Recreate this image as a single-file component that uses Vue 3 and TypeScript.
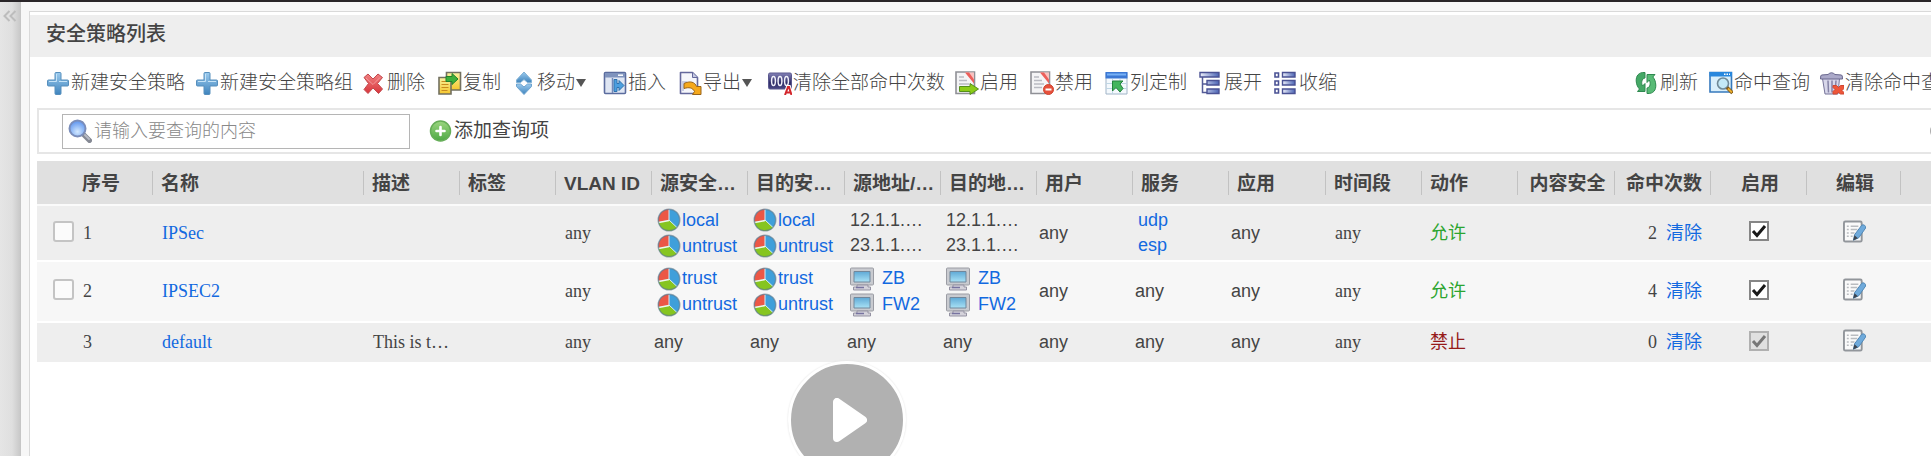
<script setup lang="ts">
import { ref } from 'vue'

interface Tool { icon: string; label: string; menu?: boolean }
interface Entry { text: string; icon?: string; link?: boolean }
interface Policy {
  id: number
  name: string
  desc: string
  vlan: string
  cells: Entry[][]
  time: string
  allow: boolean
  hits: number
  enabled: boolean
  builtin: boolean
  selected: boolean
}

const tools: Tool[] = [
  { icon: 'plus', label: '新建安全策略' },
  { icon: 'plus', label: '新建安全策略组' },
  { icon: 'delete', label: '删除' },
  { icon: 'copy', label: '复制' },
  { icon: 'move', label: '移动', menu: true },
  { icon: 'insert', label: '插入' },
  { icon: 'export', label: '导出', menu: true },
  { icon: 'counter', label: '清除全部命中次数' },
  { icon: 'enable', label: '启用' },
  { icon: 'disable', label: '禁用' },
  { icon: 'columns', label: '列定制' },
  { icon: 'expand', label: '展开' },
  { icon: 'collapse', label: '收缩' },
]

const rightTools: Tool[] = [
  { icon: 'refresh', label: '刷新' },
  { icon: 'lookup', label: '命中查询' },
  { icon: 'trash', label: '清除命中查询' },
]

const headers = [
  '序号', '名称', '描述', '标签', 'VLAN ID', '源安全…', '目的安…', '源地址/…', '目的地…',
  '用户', '服务', '应用', '时间段', '动作', '内容安全', '命中次数', '启用', '编辑',
]
const centered = ['内容安全', '命中次数', '启用', '编辑']
const wideColumns = [5, 10, 13]

const any: Entry[] = [{ text: 'any' }]
const zones = (...names: string[]): Entry[] => names.map((text) => ({ text, icon: 'zone', link: true }))
const hosts = (...names: string[]): Entry[] => names.map((text) => ({ text, icon: 'host', link: true }))
const addresses: Entry[] = [{ text: '12.1.1.…' }, { text: '23.1.1.…' }]

const policies = ref<Policy[]>([
  {
    id: 1, name: 'IPSec', desc: '', vlan: 'any',
    cells: [
      zones('local', 'untrust'), zones('local', 'untrust'), addresses, addresses, any,
      [{ text: 'udp', link: true }, { text: 'esp', link: true }], any,
    ],
    time: 'any', allow: true, hits: 2, enabled: true, builtin: false, selected: false,
  },
  {
    id: 2, name: 'IPSEC2', desc: '', vlan: 'any',
    cells: [
      zones('trust', 'untrust'), zones('trust', 'untrust'), hosts('ZB', 'FW2'), hosts('ZB', 'FW2'),
      any, any, any,
    ],
    time: 'any', allow: true, hits: 4, enabled: true, builtin: false, selected: false,
  },
  {
    id: 3, name: 'default', desc: 'This is t…', vlan: 'any',
    cells: [any, any, any, any, any, any, any],
    time: 'any', allow: false, hits: 0, enabled: true, builtin: true, selected: false,
  },
])

const query = ref('')
</script>

<template>
  <svg class="sprite" aria-hidden="true">
    <defs>
      <linearGradient id="g-blue" x1="0" y1="0" x2="0" y2="1"><stop offset="0" stop-color="#9ccbee" /><stop offset="1" stop-color="#3f84bd" /></linearGradient>
      <linearGradient id="g-red" x1="0" y1="0" x2="0" y2="1"><stop offset="0" stop-color="#f08080" /><stop offset="1" stop-color="#d8353c" /></linearGradient>
      <linearGradient id="g-green" x1="0" y1="0" x2="0" y2="1"><stop offset="0" stop-color="#9bd67f" /><stop offset="1" stop-color="#4ea845" /></linearGradient>
      <linearGradient id="g-screen" x1="0" y1="0" x2="0" y2="1"><stop offset="0" stop-color="#5fa9d6" /><stop offset="1" stop-color="#a9e2f5" /></linearGradient>
      <linearGradient id="g-bar" x1="0" y1="0" x2="1" y2="0"><stop offset="0" stop-color="#eef1fb" /><stop offset="1" stop-color="#4a63b4" /></linearGradient>
      <linearGradient id="g-counter" x1="0" y1="0" x2="0" y2="1"><stop offset="0" stop-color="#8583b8" /><stop offset="0.6" stop-color="#2f2d68" /><stop offset="1" stop-color="#4a4885" /></linearGradient>
      <radialGradient id="g-lens" cx="0.5" cy="0.7" r="0.6"><stop offset="0" stop-color="#d3e9ff" /><stop offset="1" stop-color="#6a9df0" /></radialGradient>
      <linearGradient id="g-gold" x1="0" y1="0" x2="0" y2="1"><stop offset="0" stop-color="#f8f3a0" /><stop offset="1" stop-color="#f6c62c" /></linearGradient>
    </defs>
    <symbol id="i-plus" viewBox="0 0 24 24">
      <path d="M10 1.500h4q1 0 1 1V9h6.500q1 0 1 1v4q0 1-1 1H15v7.500q0 1-1 1h-4q-1 0-1-1V15H2.500q-1 0-1-1v-4q0-1 1-1H9V2.500q0-1 1-1z" fill="url(#g-blue)" stroke="#568fbd" />
      <path d="M10.500 3v7.500H3M13 10.500h8" fill="none" stroke="#c5e3f7" />
    </symbol>
    <symbol id="i-delete" viewBox="0 0 24 24">
      <path d="M2 6.500L6 3l5 5 5-5 4.500 3.500L15.500 12.500l5 5.500L16.500 22.500l-5.500-5.500-5 5.500L2 18.500l4.500-6z" fill="url(#g-red)" stroke="#c2484c" stroke-linejoin="round" />
      <path d="M4 7l7 6.500L18 6.500" fill="none" stroke="#f9aeb0" opacity="0.700" />
    </symbol>
    <symbol id="i-copy" viewBox="0 0 24 24">
      <path d="M8.500 1.500h14V19h-14z" fill="url(#g-gold)" stroke="#727060" stroke-width="1.600" />
      <path d="M1 6.500h12V23H1z" fill="url(#g-gold)" stroke="#727060" stroke-width="1.600" />
      <path d="M3.500 10.500h6M3.500 13.500h7M3.500 16.500h7M3.500 19.500h6" stroke="#c98a1e" stroke-width="1.200" />
      <path d="M8 5.500h6V2.500l6 5.500-6 5.500v-3H8z" fill="#3eb03b" stroke="#23812a" />
    </symbol>
    <symbol id="i-move" viewBox="0 0 24 24">
      <path d="M12 1l7.500 8v2.500h-4L12 8.500l-3.500 3h-4V9z" fill="url(#g-blue)" stroke="#7fb0d4" />
      <path d="M12 23.500L4.500 15.500V13h4l3.500 3 3.500-3h4v2.500z" fill="url(#g-blue)" stroke="#6da3cf" />
    </symbol>
    <symbol id="i-insert" viewBox="0 0 24 24">
      <rect x="1.500" y="1.500" width="21" height="21" rx="1" fill="#dfe6f3" stroke="#5b6c9e" stroke-width="1.600" />
      <path d="M2 2h20v4.500H2z" fill="#7f93bd" /><path d="M15 4.200h5" stroke="#fff" stroke-width="1.500" />
      <path d="M9.500 7v15" stroke="#7388b8" stroke-width="1.500" />
      <path d="M11 8.500h3v4h2v-3l5 5-5 5v-3h-2v4h-3z" fill="#4c9fdf" stroke="#2f71ad" />
    </symbol>
    <symbol id="i-export" viewBox="0 0 24 24">
      <path d="M2.500 1.500h12l5 5v16h-17z" fill="#f5f6fb" stroke="#64689c" stroke-width="1.600" stroke-linejoin="round" />
      <path d="M14.500 1.500v5h5" fill="#c5c9e3" stroke="#64689c" />
      <path d="M5 20v-9h4" fill="none" stroke="#c9cde3" stroke-width="2" />
      <path d="M6 12.500c6-3 11-1.500 12.500 3H23v8h-8.500l2-3C14.500 16.500 11 16 6 17.500z" fill="#f5a81c" stroke="#99641a" stroke-linejoin="round" />
    </symbol>
    <symbol id="i-counter" viewBox="0 0 24 24">
      <rect x="0.500" y="2" width="23" height="16" rx="1.500" fill="url(#g-counter)" stroke="#5a588e" />
      <g fill="none" stroke="#f1f1fa" stroke-width="1.500"><ellipse cx="5.500" cy="10" rx="1.900" ry="4.500" /><ellipse cx="12" cy="10" rx="1.900" ry="4.500" /><ellipse cx="18.500" cy="10" rx="1.900" ry="4.500" /></g>
      <path d="M17 24l3-8h1l2.500 8M18 21.500h4.500" fill="none" stroke="#fff" stroke-width="4" />
      <path d="M17 24l3-8h1l2.500 8M18 21.500h4.500" fill="none" stroke="#d3262c" stroke-width="2" />
    </symbol>
    <symbol id="i-enable" viewBox="0 0 24 24">
      <path d="M1 1h18.500v21.500H1z" fill="#f4f4f6" stroke="#8f9096" stroke-width="1.600" />
      <path d="M4 6h5M4 9.500h8M4 13h10" stroke="#b9bac2" stroke-width="1.500" />
      <path d="M10 1.500h9v10z" fill="#f9c2c0" /><path d="M10 1.500h4l5 7v4z" fill="#ec5f5b" />
      <path d="M4.500 15.500H15V12.500l8.500 5.500-8.500 5.500v-3H4.500z" fill="#8ccc17" stroke="#55901b" stroke-linejoin="round" />
    </symbol>
    <symbol id="i-disable" viewBox="0 0 24 24">
      <path d="M1 1h18.500v21.500H1z" fill="#f4f4f6" stroke="#8f9096" stroke-width="1.600" />
      <path d="M4 6h5M4 9.500h8M4 13h10M4 16.500h8" stroke="#b9bac2" stroke-width="1.500" />
      <path d="M10 1.500h9v10z" fill="#f9c2c0" /><path d="M10 1.500h4l5 7v4z" fill="#ec5f5b" />
      <circle cx="18.500" cy="18.500" r="5" fill="#e6503b" stroke="#cf442f" /><path d="M15.500 18.500h6" stroke="#fff" stroke-width="2" />
    </symbol>
    <symbol id="i-columns" viewBox="0 0 24 24">
      <path d="M1 1.500h21V23H1z" fill="#f4f9fd" stroke="#a1b4c7" />
      <path d="M.5 1h22v6.500H.5z" fill="#3c78d4" /><path d="M2 3.500h19" stroke="#76b1f6" stroke-width="2" />
      <path d="M7.500 8v15M1 12.500h21M1 17.500h21M15 8v15" stroke="#bfd6e4" />
      <path d="M7.500 10h10.500l-3 3 3 4.500-3 3.500-4-4.500-3.500 3.500z" fill="#43b55d" stroke="#24833d" />
    </symbol>
    <symbol id="i-expand" viewBox="0 0 24 24">
      <path d="M3.500 6v15.500H8M3.500 13H8" fill="none" stroke="#555c97" stroke-width="1.500" />
      <g fill="url(#g-bar)" stroke="#4a5294" stroke-width="1.400"><path d="M1 1.500h19V6H1zM8 9.500h12V14H8zM8 18h12v4.500H8z" /></g>
    </symbol>
    <symbol id="i-collapse" viewBox="0 0 24 24">
      <g fill="url(#g-bar)" stroke="#4a5294" stroke-width="1.400"><path d="M8.500 1.500H21V6H8.500zM8.500 9.500H21V14H8.500zM8.500 18H21v4.500H8.500z" /></g>
      <g fill="#fff" stroke="#4a5294" stroke-width="1.600"><path d="M1 2h3.500v4H1zM1 10h3.500v4H1zM1 18h3.500v4H1z" /></g>
    </symbol>
    <symbol id="i-refresh" viewBox="0 0 24 24">
      <path d="M10 1.500C3.500 1 1 5 1.200 10c.2 4 1.800 6.500 3.300 8L2.500 20.500H10v-8L7.500 15C6 12 6.500 7.500 10 7z" fill="#45a866" stroke="#2f8950" stroke-linejoin="round" />
      <path d="M12 22.500c6.500.5 9-3.500 8.800-8.500-.2-4-1.500-6.500-3-8L20 3.500h-8V11.500L14.300 9c1.500 3 1.200 7.500-2.300 8z" fill="#58bb76" stroke="#2f8950" stroke-linejoin="round" />
    </symbol>
    <symbol id="i-lookup" viewBox="0 0 24 24">
      <path d="M1 1.500h21.500V21H1z" fill="#d9effb" stroke="#3679bd" stroke-width="1.600" />
      <path d="M.5 1h22.500v4.500H.5z" fill="#2887dd" /><path d="M15 3.200h6" stroke="#fff" stroke-width="1.500" stroke-dasharray="1.500 1" />
      <circle cx="14" cy="12.500" r="5.500" fill="#c3e8f6" stroke="#6f8997" stroke-width="1.600" />
      <path d="M18 16.500l5.500 5.500" stroke="#7a5417" stroke-width="3.500" /><path d="M19 17.500l4 4" stroke="#e9ad2c" stroke-width="2" />
    </symbol>
    <symbol id="i-trash" viewBox="0 0 24 24">
      <path d="M2.500 7.500h17L18 23H5z" fill="#d8d7ea" stroke="#77759a" />
      <path d="M8 9.500l.5 12M12 9.500v12M16 9.500l-.5 6" stroke="#8583a6" stroke-width="1.500" />
      <path d="M8 3.500q3.500-3.500 7 0l6.500.5q1 0 1 4H.5q0-4 1-4z" fill="#aba9c9" stroke="#68668d" />
      <path d="M13 14.500h3.500l2 2 2-2H24v3l-2 2 2 2V23h-3.500l-2-1.500-2 1.500H13v-2.500l2-2-2-2z" fill="#ee5639" stroke="#cf4732" />
    </symbol>
    <symbol id="i-search" viewBox="0 0 24 24">
      <path d="M15.500 15.500l6 6" stroke="#858994" stroke-width="5" stroke-linecap="round" />
      <path d="M17 16l4 4" stroke="#b7bbc5" stroke-width="2" stroke-linecap="round" />
      <circle cx="9.500" cy="9.500" r="8" fill="url(#g-lens)" stroke="#7a8dba" stroke-width="2" />
    </symbol>
    <symbol id="i-add" viewBox="0 0 24 24">
      <circle cx="11.500" cy="12" r="10" fill="url(#g-green)" stroke="#65ad57" stroke-width="1.500" />
      <path d="M11.500 8v8M7.500 12h8" stroke="#fff" stroke-width="2.600" stroke-linecap="round" />
    </symbol>
    <symbol id="i-zone" viewBox="0 0 24 24">
      <circle cx="12" cy="12" r="10.800" fill="#3f9fda" />
      <path d="M12 12V1.200A10.800 10.800 0 0 0 1.500 14z" fill="#ec5746" />
      <path d="M12 12L1.500 14A10.800 10.800 0 0 0 20 19.500z" fill="#86c520" />
      <path d="M12 1.500V12l8 7.500" fill="none" stroke="#d9eef5" />
      <path d="M12 12.500L1.500 14.500" stroke="#f3f6ee" stroke-width="1.600" />
      <circle cx="12" cy="12" r="10.800" fill="none" stroke="#61798a" stroke-width="1.400" opacity="0.600" />
    </symbol>
    <symbol id="i-host" viewBox="0 0 24 24">
      <path d="M1.500 1h21q1 0 1 1v15q0 1-1 1h-21q-1 0-1-1V2q0-1 1-1z" fill="#c9cbd0" stroke="#9b9ca3" />
      <path d="M4 4.500h16v10.500H4z" fill="url(#g-screen)" stroke="#71879b" />
      <path d="M7 18h11v2h2.500v3H3.500v-3H7z" fill="#d4d2da" stroke="#9593a3" />
      <path d="M6 20.500h8" stroke="#7773a0" stroke-width="1.500" />
    </symbol>
    <symbol id="i-edit" viewBox="0 0 24 24">
      <path d="M2.500 1.500h15.500q1.500 0 1.500 1.500v18q0 1.500-1.500 1.500H2.500Q1 22.500 1 21V3q0-1.500 1.500-1.500z" fill="#fafafa" stroke="#92969b" stroke-width="2" />
      <path d="M4 6.500h2M8 6.500h8M4 10h2M8 10h7M4 13.500h2M8 13.500h4M4 17h2M8 17h2" stroke="#b9bcc0" stroke-width="1.500" />
      <path d="M12 15.500L19.500 5.500q1.500-1 3 0t1 3L16.500 18.500l-5.500 2.500z" fill="#6faadb" stroke="#4f86b5" />
      <path d="M12 16l3.500 3-5 2.500z" fill="#3c4550" />
    </symbol>
    <symbol id="i-close" viewBox="0 0 16 16">
      <circle cx="8" cy="8" r="7" fill="#eee" stroke="#aaa" stroke-width="2" />
    </symbol>
  </svg>

  <div class="page">
    <aside class="sidebar">
      <button class="fold" type="button" aria-label="展开菜单">
        <svg viewBox="0 0 14 12"><path d="M6.500 1l-5 5 5 5M12.500 1l-5 5 5 5" fill="none" stroke="#bdbdbd" stroke-width="2" /></svg>
      </button>
    </aside>

    <main class="main">
      <section class="panel">
        <h1 class="title">安全策略列表</h1>

        <div class="toolbar">
          <div class="tools">
            <button v-for="tool in tools" :key="tool.label" class="tool" type="button">
              <svg class="icon"><use :href="'#i-' + tool.icon" /></svg>
              <span>{{ tool.label }}</span>
              <svg v-if="tool.menu" class="caret" viewBox="0 0 10 8"><path d="M0 0h10L5 8z" fill="#555" /></svg>
            </button>
          </div>
          <div class="tools-right">
            <button v-for="tool in rightTools" :key="tool.label" class="tool" type="button">
              <svg class="icon"><use :href="'#i-' + tool.icon" /></svg>
              <span>{{ tool.label }}</span>
            </button>
          </div>
        </div>

        <form class="search" @submit.prevent>
          <label class="field">
            <svg class="icon"><use href="#i-search" /></svg>
            <input v-model="query" class="query" type="text" placeholder="请输入要查询的内容" aria-label="查询内容" />
          </label>
          <button class="tool" type="button">
            <svg class="icon"><use href="#i-add" /></svg>
            <span>添加查询项</span>
          </button>
          <button class="close" type="button" aria-label="关闭">
            <svg><use href="#i-close" /></svg>
          </button>
        </form>

        <table class="grid">
          <colgroup>
            <col class="c-check" /><col class="c-no" /><col class="c-name" />
            <col v-for="n in 15" :key="n" :class="wideColumns.includes(n) ? 'c-wide' : 'c-std'" />
            <col class="c-edit" /><col />
          </colgroup>
          <thead>
            <tr>
              <th class="bare" aria-label="选择"></th>
              <th v-for="h in headers" :key="h" :class="{ center: centered.includes(h), first: h === '序号' }">{{ h }}</th>
              <th class="bare" aria-label="更多"></th>
            </tr>
          </thead>
          <tbody>
            <tr v-for="p in policies" :key="p.id">
              <td class="pick">
                <input v-if="!p.builtin" v-model="p.selected" class="box" type="checkbox" :aria-label="'选择 ' + p.name" />
              </td>
              <td class="serif no">{{ p.id }}</td>
              <td class="serif text"><a href="#">{{ p.name }}</a></td>
              <td class="serif text">{{ p.desc }}</td>
              <td></td>
              <td class="serif text">{{ p.vlan }}</td>
              <td v-for="(cell, i) in p.cells" :key="i" class="list">
                <div v-for="e in cell" :key="e.text" class="entry" :class="[e.icon, { inset: cell.length > 1 }]">
                  <svg v-if="e.icon" class="icon"><use :href="'#i-' + e.icon" /></svg>
                  <a v-if="e.link" href="#">{{ e.text }}</a>
                  <span v-else>{{ e.text }}</span>
                </div>
              </td>
              <td class="serif text">{{ p.time }}</td>
              <td class="action" :class="p.allow ? 'allow' : 'deny'">{{ p.allow ? '允许' : '禁止' }}</td>
              <td></td>
              <td class="hits"><span class="serif">{{ p.hits }}</span><a href="#">清除</a></td>
              <td class="center">
                <input v-model="p.enabled" class="tick" type="checkbox" :disabled="p.builtin" :aria-label="'启用 ' + p.name" />
              </td>
              <td class="center">
                <button class="edit" type="button" :aria-label="'编辑 ' + p.name"><svg class="icon"><use href="#i-edit" /></svg></button>
              </td>
              <td></td>
            </tr>
          </tbody>
        </table>
      </section>
    </main>

    <button class="play" type="button" aria-label="播放">
      <svg viewBox="0 0 34 44"><path d="M4 4v36l26-18z" fill="#fff" stroke="#fff" stroke-width="8" stroke-linejoin="round" /></svg>
    </button>
  </div>
</template>

<style>
body {
  margin: 0;
}
</style>

<style scoped>
.sprite {
  position: absolute;
  width: 0;
  height: 0;
}

.page {
  position: relative;
  display: flex;
  box-sizing: border-box;
  height: 100vh;
  overflow: hidden;
  border-top: 2px solid #2a2629;
  background: #f7f7f7;
  color: #444;
  font-family: "Liberation Sans", "Noto Sans CJK SC", sans-serif;
  font-size: 18px;
}

button {
  padding: 0;
  border: 0;
  background: none;
  color: inherit;
  font: inherit;
  cursor: pointer;
}

a {
  color: #1269e0;
  text-decoration: none;
}

.icon {
  flex: none;
  display: block;
  width: 24px;
  height: 24px;
}

.serif {
  font-family: "Liberation Serif", "Noto Sans CJK SC", serif;
}

.sidebar {
  flex: none;
  width: 20px;
  border-right: 1px solid #c6c6c6;
  background: linear-gradient(90deg, #e5e5e5, #dfdfdf 60%, #c9c9c9);
}

.fold {
  display: block;
  width: 14px;
  margin: 8px 0 0 3px;
}

.fold svg {
  display: block;
  width: 14px;
  height: 12px;
}

.main {
  flex: 1;
  min-width: 0;
  padding: 9px 0 0 8px;
}

.panel {
  height: 100%;
  padding-top: 3px;
  border: solid #d9d9d9;
  border-width: 1px 0 0 1px;
  background: #fff;
}

.title {
  box-sizing: border-box;
  height: 42px;
  margin: 0;
  padding: 0 16px 4px;
  background: #eee;
  font-size: 20px;
  font-weight: 500;
  line-height: 38px;
}

.toolbar {
  display: flex;
  justify-content: space-between;
  height: 51px;
  padding-left: 16px;
}

.tools {
  display: grid;
  grid-template-columns: 149px 167px 76px 74px 91px 75px 90px 187px 75px 75px 94px 75px 75px;
}

.tools-right {
  display: grid;
  grid-template-columns: 74px 111px 140px;
  margin-right: -29px;
}

.tool {
  display: flex;
  align-items: center;
  gap: 1px;
  font-size: 19px;
  line-height: 28px;
  white-space: nowrap;
}

.tools .tool,
.tools-right .tool {
  font-weight: 300;
}

.caret {
  width: 10px;
  height: 8px;
}

.search {
  display: flex;
  align-items: center;
  height: 42px;
  margin-left: 7px;
  padding-left: 23px;
  border: 2px solid #e6e6e6;
  border-right: 0;
}

.field {
  display: flex;
  align-items: center;
  gap: 2px;
  box-sizing: border-box;
  width: 348px;
  height: 35px;
  margin-right: 19px;
  padding-left: 5px;
  border: 1px solid #b5b5b5;
  background: #fff;
}

.query {
  flex: 1;
  min-width: 0;
  padding: 0;
  border: 0;
  outline: 0;
  background: none;
  color: #444;
  font: inherit;
  font-weight: 300;
}

.query::placeholder {
  color: #888;
  opacity: 1;
}

.close {
  width: 16px;
  height: 16px;
  margin: 0 -15px 0 auto;
}

.close svg {
  display: block;
  width: 16px;
  height: 16px;
}

.grid {
  width: calc(100% - 7px);
  margin: 7px 0 0 7px;
  border-spacing: 0;
  table-layout: fixed;
}

.c-check { width: 39px; }
.c-no { width: 77px; }
.c-name { width: 211px; }
.c-std { width: 96px; }
.c-wide { width: 97px; }
.c-edit { width: 94px; }

th {
  height: 41px;
  padding: 2px 0 0 8px;
  border-bottom: 2px solid #fafafa;
  background: linear-gradient(#c2c2c2, #c2c2c2) right center / 1px 24px no-repeat #e0e0e0;
  font-size: 19px;
  line-height: 24px;
  text-align: left;
  white-space: nowrap;
}

th.bare {
  background: #e0e0e0;
}

th.first {
  padding-left: 6px;
}

th.center {
  padding-left: 2px;
  text-align: center;
}

td {
  height: 39px;
  padding: 0;
  border-bottom: 2px solid #fff;
  background: #eee;
  line-height: 25px;
  white-space: nowrap;
}

tr:nth-child(even) td {
  height: 59px;
  background: #f7f7f7;
}

tr:first-child td {
  height: 54px;
}

tbody tr td.pick {
  height: auto;
  padding: 0 0 4px 16px;
}

tbody tr td.center {
  height: auto;
  padding-bottom: 4px;
}

.no {
  padding-left: 7px;
}

.text {
  padding-left: 9px;
}

.list {
  padding-left: 2px;
}

.entry {
  display: flex;
  align-items: center;
}

.inset {
  padding-left: 3px;
}

.zone {
  gap: 1px;
  height: 26px;
}

.host {
  gap: 8px;
  height: 26px;
}

.action {
  padding-left: 8px;
}

.allow { color: #2ca52f; }
.deny { color: #961a1a; }

.hits a {
  margin-left: 9px;
}

.hits {
  padding-right: 9px;
  text-align: right;
}

.box,
.tick {
  display: block;
  appearance: none;
  box-sizing: border-box;
  width: 21px;
  height: 21px;
  margin: 0;
  border: 2px solid #c4c4c4;
  border-radius: 3px;
  background: #fbfbfb;
}

.tick {
  width: 20px;
  height: 20px;
  margin: 0 auto;
  border-color: #868686;
  border-radius: 0;
  background: #fff;
}

.tick:checked {
  background-image: url("data:image/svg+xml,%3Csvg xmlns='http://www.w3.org/2000/svg' viewBox='0 0 16 16'%3E%3Cpath d='M2 8l4 4.500L14 3' fill='none' stroke='%23181818' stroke-width='3'/%3E%3C/svg%3E");
}

.tick:disabled {
  border-color: #b0b0b0;
  background-color: #e0e0e0;
  background-image: url("data:image/svg+xml,%3Csvg xmlns='http://www.w3.org/2000/svg' viewBox='0 0 16 16'%3E%3Cpath d='M2 8l4 4.500L14 3' fill='none' stroke='%23777' stroke-width='3'/%3E%3C/svg%3E");
}

.edit {
  display: block;
  margin: 0 auto;
}

.edit .icon {
  width: 23px;
  height: 23px;
}

.play {
  position: absolute;
  top: 359px;
  left: 788px;
  display: flex;
  align-items: center;
  justify-content: center;
  box-sizing: border-box;
  width: 118px;
  height: 118px;
  padding-left: 6px;
  border: 3px solid #fff;
  border-radius: 50%;
  background: #b1b1b1;
  box-shadow: 0 0 2px #ddd;
}

.play svg {
  width: 34px;
  height: 44px;
}
</style>
